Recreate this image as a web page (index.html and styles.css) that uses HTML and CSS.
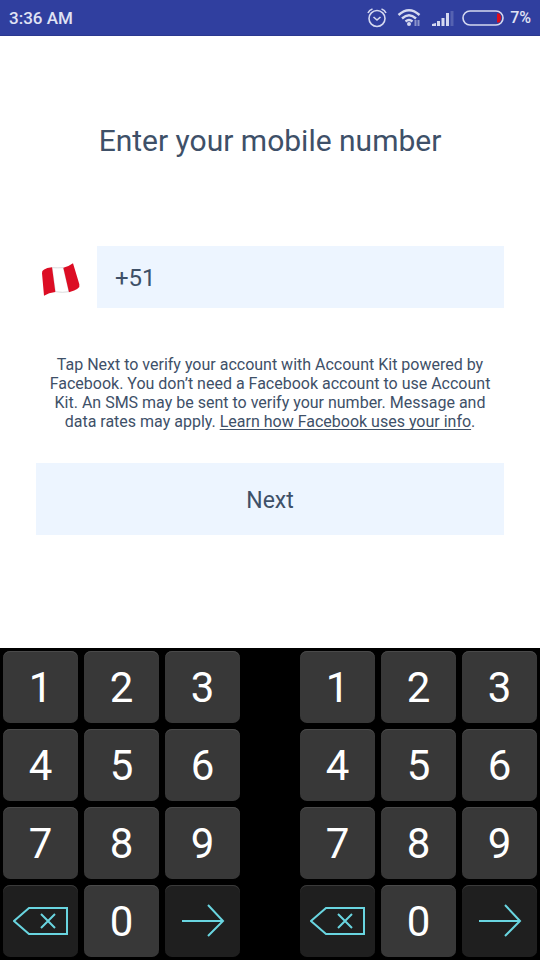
FILE: index.html
```html
<!DOCTYPE html>
<html lang="en">
<head>
<meta charset="utf-8">
<meta name="viewport" content="width=device-width, initial-scale=1">
<title>Enter your mobile number</title>
<link rel="stylesheet" href="styles.css">
</head>
<body>
<svg class="defs" aria-hidden="true">
  <symbol id="backspace" viewBox="0 0 56 30">
    <path d="M16 2H54V28H16L1 15Z" stroke-width="2"/>
    <path d="M28 8L42 22M42 8L28 22" stroke-width="2"/>
  </symbol>
  <symbol id="arrow" viewBox="0 0 44 34">
    <path d="M1 17H42M27 1L42 17L27 32" stroke-width="2"/>
  </symbol>
</svg>

<header class="status">
  <span class="time">3:36 AM</span>
  <div class="indicators">
    <svg class="alarm" width="20" height="20" viewBox="0 0 20 20" aria-hidden="true">
      <circle cx="10" cy="10.500" r="8"/>
      <path d="M6.500 9L10 12L13.500 9M1 5Q2.200 2 5.500 1M19 5Q17.800 2 14.500 1"/>
    </svg>
    <svg class="wifi" width="25" height="19" viewBox="0 0 25 19" aria-hidden="true">
      <path class="arc" d="M1.500 7Q12 -2.500 22.500 7M5 10.500Q12 4.200 19 10.500M8.500 13.500Q12 10.700 15.500 13.500"/>
      <circle cx="12" cy="16" r="2"/>
      <path class="traffic" d="M18.500 12V18M21.500 12V18"/>
    </svg>
    <svg class="signal" width="22" height="17" viewBox="0 0 22 17" aria-hidden="true">
      <path d="M0 17V15L4 14V17ZM5 17V12H8V17ZM9.500 17V9H12.500V17ZM14 17V4H17V17Z"/>
      <path class="faint" d="M18.500 17V2H21.500V17Z"/>
    </svg>
    <svg class="battery" width="42" height="16" viewBox="0 0 42 16" aria-hidden="true">
      <path class="charge" d="M35 3.500H37.500Q40.500 8 37.500 12.500H35Z"/>
      <rect x="1" y="1" width="40" height="14" rx="7"/>
    </svg>
    <span class="percent">7%</span>
  </div>
</header>

<main class="form">
  <h1>Enter your mobile number</h1>
  <div class="phone">
    <button class="country" type="button" aria-label="Country: Peru">
      <svg width="40" height="36" viewBox="33 80 120 108" aria-hidden="true">
        <path fill="#fff" stroke="#c8c8cc" stroke-width="2" d="M66 97Q84 98 100 97L117 169Q98 173 76 169Z"/>
        <path fill="#dc0d24" d="M36 114Q34 100 66 96L76 170Q56 172 42 181Z"/>
        <path fill="#dc0d24" d="M100 97Q116 94 129 84L148 147Q153 161 117 171Z"/>
      </svg>
    </button>
    <input type="tel" value="+51" aria-label="Mobile number">
  </div>
  <p class="terms">Tap Next to verify your account with Account Kit powered by Facebook. You don’t need a Facebook account to use Account Kit. An SMS may be sent to verify your number. Message and data rates may apply. <a href="#info">Learn how Facebook uses your info</a>.</p>
  <button class="next" type="submit">Next</button>
</main>

<section class="keyboard" aria-label="Number keyboard">
  <div class="pad">
    <button>1</button><button>2</button><button>3</button>
    <button>4</button><button>5</button><button>6</button>
    <button>7</button><button>8</button><button>9</button>
    <button class="action" aria-label="Backspace"><svg width="56" height="30"><use href="#backspace"/></svg></button>
    <button>0</button>
    <button class="action" aria-label="Go"><svg width="44" height="34"><use href="#arrow"/></svg></button>
  </div>
  <div class="pad">
    <button>1</button><button>2</button><button>3</button>
    <button>4</button><button>5</button><button>6</button>
    <button>7</button><button>8</button><button>9</button>
    <button class="action" aria-label="Backspace"><svg width="56" height="30"><use href="#backspace"/></svg></button>
    <button>0</button>
    <button class="action" aria-label="Go"><svg width="44" height="34"><use href="#arrow"/></svg></button>
  </div>
</section>
</body>
</html>
```
FILE: styles.css
```css
* { box-sizing: border-box; }

body {
  margin: 0;
  min-height: 100vh;
  display: flex;
  flex-direction: column;
  background: #fff;
  color: #3e5068;
  font-family: Roboto, "Liberation Sans", sans-serif;
}

button, input {
  margin: 0;
  padding: 0;
  border: 0;
  border-radius: 0;
  font: inherit;
  color: inherit;
}

.defs { position: absolute; width: 0; height: 0; }

.status {
  display: flex;
  align-items: center;
  justify-content: space-between;
  height: 36px;
  padding: 0 9px;
  background: #303f9f;
  border-bottom: 1px solid #2b388f;
  color: #e0e3f4;
  font-size: 17px;
  font-weight: 500;
}

.indicators { display: flex; align-items: center; gap: 10px; }
.indicators svg { fill: none; stroke: #d5d9f0; }
.indicators .alarm { stroke-width: 1.6; }
.indicators .wifi { stroke-width: 2.4; }
.indicators .wifi circle { fill: #d5d9f0; stroke: none; }
.indicators .wifi .traffic { stroke: #8c95cb; stroke-width: 2; }
.indicators .signal { margin-right: -2px; fill: #d5d9f0; stroke: none; }
.indicators .signal .faint { fill: #5562b1; }
.indicators .battery { stroke-width: 1.6; }
.indicators .battery .charge { fill: #e00c1c; stroke: none; }
.percent { margin-left: -4px; font-size: 16px; line-height: 20px; }

.form {
  flex: 1;
  display: flex;
  flex-direction: column;
  padding: 87px 36px 24px;
}

h1 {
  margin: 0 0 87px;
  font-size: 30px;
  line-height: 36px;
  font-weight: 400;
  text-align: center;
}

.phone { display: flex; height: 62px; }

.country {
  width: 61px;
  padding: 6px 0 0 5px;
  background: none;
  text-align: left;
}

.country svg { display: block; }

.phone input {
  flex: 1;
  min-width: 0;
  padding: 2px 18px 0;
  background: #edf5ff;
  font-size: 24px;
}

.terms {
  margin: 47px 0 32px;
  padding: 0 6px;
  font-size: 16px;
  line-height: 19px;
  text-align: center;
}

.terms a {
  color: inherit;
  text-underline-offset: 2px;
  text-decoration-thickness: 1px;
  text-decoration-skip-ink: none;
}

.next {
  height: 72px;
  padding-top: 2px;
  background: #edf5ff;
  font-size: 23px;
}

.keyboard {
  display: flex;
  gap: 60px;
  padding: 3px;
  background: #000;
}

.pad {
  flex: 1;
  display: grid;
  grid-template-columns: repeat(3, 1fr);
  grid-auto-rows: 72px;
  gap: 6px;
}

.pad button {
  display: flex;
  align-items: center;
  justify-content: center;
  border-radius: 7px;
  background: #383838;
  box-shadow: inset 0 1px #4a4a4a;
  color: #fff;
  font-size: 42px;
}

.pad .action { background: #1f1f1f; box-shadow: inset 0 1px #3a3a3a; }
.pad svg { fill: none; stroke: #69d5e0; }
```
